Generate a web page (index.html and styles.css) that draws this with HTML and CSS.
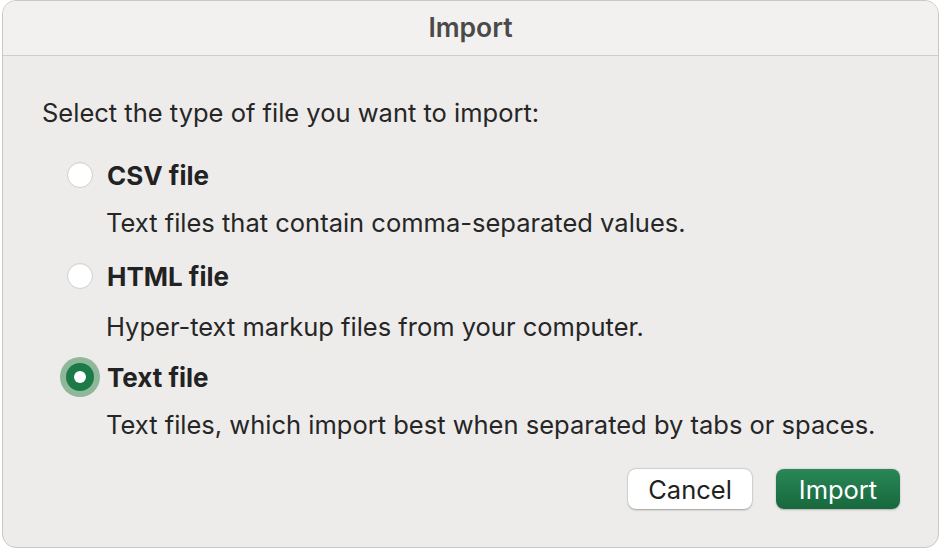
FILE: index.html
```html
<!DOCTYPE html>
<html>
<head>
<meta charset="utf-8">
<link rel="stylesheet" href="styles.css">
</head>
<body>
<div class="dialog">
  <div class="titlebar">Import</div>
  <div class="content">
    <p class="prompt">Select the type of file you want to import:</p>
    <div class="options">
      <div class="option">
        <div class="row"><span class="radio"></span><span class="label">CSV file</span></div>
        <div class="desc">Text files that contain comma-separated values.</div>
      </div>
      <div class="option opt-html">
        <div class="row"><span class="radio"></span><span class="label">HTML file</span></div>
        <div class="desc desc-html">Hyper-text markup files from your computer.</div>
      </div>
      <div class="option opt-text">
        <div class="row"><span class="radio checked"></span><span class="label">Text file</span></div>
        <div class="desc">Text files, which import best when separated by tabs or spaces.</div>
      </div>
    </div>
    <div class="buttons">
      <button class="btn cancel">Cancel</button>
      <button class="btn primary">Import</button>
    </div>
  </div>
</div>
</body>
</html>
```
FILE: styles.css
```css
html, body {
  margin: 0;
  padding: 0;
  background: #ffffff;
}
body {
  width: 942px;
  height: 550px;
  font-family: "Inter", "Liberation Sans", Arial, sans-serif;
  color: #262626;
  overflow: hidden;
}
.dialog {
  margin-left: 2px;
  width: 935px;
  height: 546px;
  border: 1px solid #c9c8c7;
  border-radius: 14px;
  background: #edeceb;
  overflow: hidden;
  display: flex;
  flex-direction: column;
}
.titlebar {
  height: 55px;
  padding-bottom: 3px;
  box-sizing: border-box;
  border-bottom: 1px solid #cfcecd;
  background: #f2f1f0;
  display: flex;
  align-items: center;
  justify-content: center;
  font-weight: 600;
  font-size: 26.5px;
  color: #4a4a4a;
}
.content {
  flex: 1;
  padding: 42px 38px 0 39px;
  display: flex;
  flex-direction: column;
}
.prompt {
  margin: 0;
  font-size: 25.5px;
  line-height: 30px;
}
.options {
  margin-top: 32px;
  padding-left: 25px;
  display: flex;
  flex-direction: column;
}
.opt-html {
  margin-top: 23px;
}
.opt-text {
  margin-top: 20px;
}
.row {
  display: flex;
  align-items: center;
  height: 30px;
  gap: 14px;
}
.radio {
  width: 26px;
  height: 26px;
  box-sizing: border-box;
  border-radius: 50%;
  background: #ffffff;
  border: 1px solid #d0cfce;
  box-shadow: inset 0 1px 1px rgba(0,0,0,0.04);
  flex: none;
  position: relative;
}
.radio.checked {
  width: 28px;
  height: 28px;
  margin-left: -1px;
  margin-right: -1px;
  border: none;
  background: #1b7a48;
  box-shadow: 0 0 0 6px #8fb89b;
}
.radio.checked::after {
  content: "";
  position: absolute;
  left: 8px;
  top: 8px;
  width: 12px;
  height: 12px;
  border-radius: 50%;
  background: #ffffff;
}
.label {
  font-weight: 700;
  font-size: 26px;
  color: #222222;
}
.desc {
  margin-top: 18px;
  padding-left: 39px;
  font-size: 25.5px;
  line-height: 30px;
}
.desc-html {
  margin-top: 21px;
}
.buttons {
  margin-top: 29px;
  display: flex;
  justify-content: flex-end;
  gap: 24px;
}
.btn {
  width: 124px;
  height: 40px;
  border-radius: 8px;
  font-family: "Inter", "Liberation Sans", Arial, sans-serif;
  font-size: 25.5px;
  padding: 0;
  cursor: default;
}
.cancel {
  background: #ffffff;
  color: #222222;
  border: none;
  box-shadow: 0 0.5px 2px rgba(0,0,0,0.3), 0 0 0 0.5px rgba(0,0,0,0.08);
}
.primary {
  background: linear-gradient(#2a8756, #17683d);
  color: #ffffff;
  border: none;
  box-shadow: 0 0.5px 2px rgba(0,0,0,0.25);
}
```
